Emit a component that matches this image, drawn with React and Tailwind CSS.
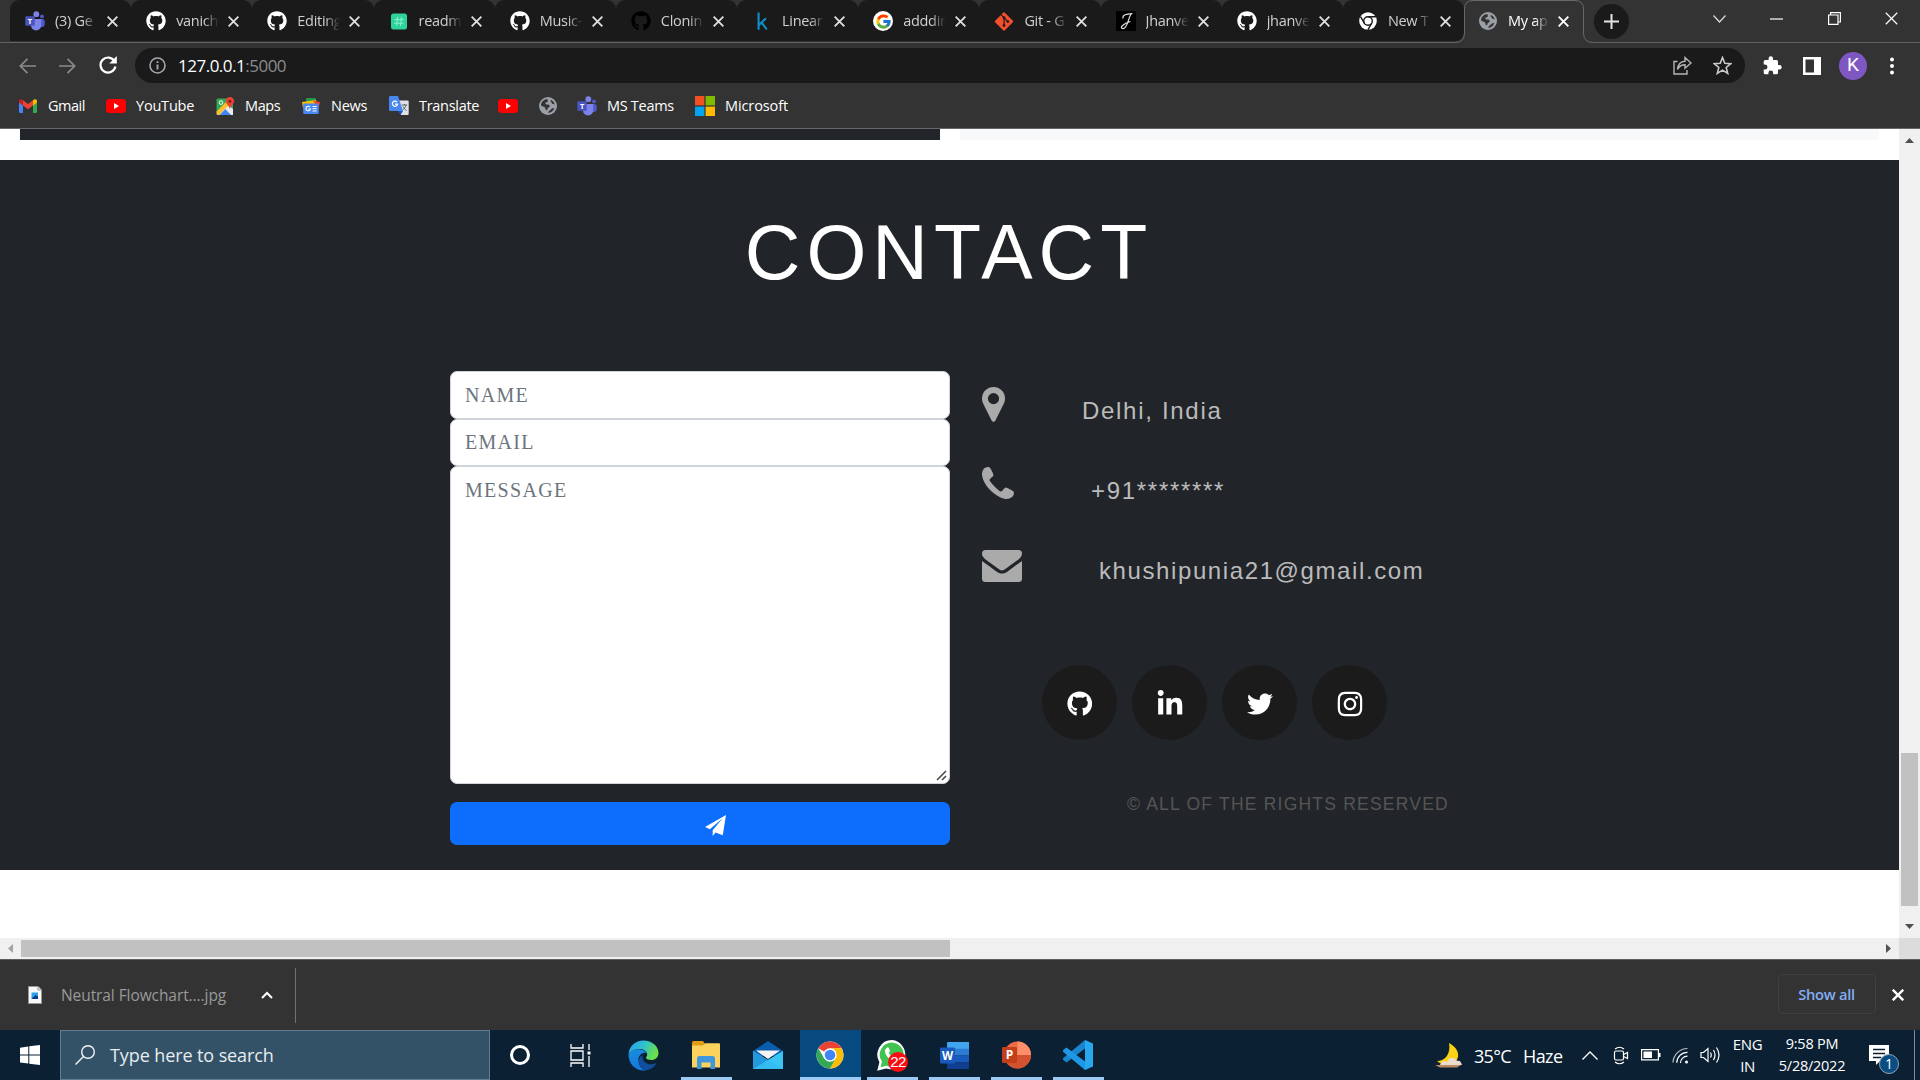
import React from "react";
import { FaGithub, FaLinkedinIn, FaTwitter, FaGitAlt, FaInstagram } from "react-icons/fa";
import { FcGoogle } from "react-icons/fc";

/* ---------- small drawings ---------- */
const Teams = ({ s = 20 }) => (
  <svg width={s} height={s} viewBox="0 0 20 20">
    <circle cx="17" cy="5.4" r="1.9" fill="#5059c9" />
    <rect x="13" y="8" width="6.7" height="8" rx="2.4" fill="#5059c9" />
    <circle cx="11.3" cy="3.2" r="2.9" fill="#7b83eb" />
    <path d="M6 8h10.2v6.5a5 5 0 0 1-10.2 0Z" fill="#7b83eb" />
    <rect x="0.3" y="5.3" width="9.4" height="9.4" rx="1" fill="#4b53bc" />
    <text x="5" y="12.7" fontSize="7.5" fontWeight="700" fill="#fff" textAnchor="middle" fontFamily="Open Sans">T</text>
  </svg>
);
const Globe = () => (
  <svg width="18" height="18" viewBox="0 0 18 18">
    <circle cx="9" cy="9" r="9" fill="#9aa0a6" />
    <path d="M2 8.500C2 5 4.800 2.200 8.600 2c-.5 1 .6 1.500.2 2.400-.5 1-2 .6-2.400 1.600-.3 1 .6 1.500 1.500 1.500 1.500 0 2.800.2 2.800 1.700s-2 1.300-2.200 2.500c-.2 1.200-.5 1.500-1 1.500-1.500-.2-.6-2-1.800-2.900C4.800 9.600 3 9.400 2 8.500Z" fill="#333" />
    <path d="M9 15.900c1-.8.300-1.800 1.600-2.400 1.300-.6 1.200-1.600 2.400-2 1-.4 1.800-.2 2.400-.4A7.100 7.100 0 0 1 9 15.900ZM12 2.700c-.5 1-.6 1.600.2 2.200s.6 1.800 1.700 2 1.500.400 1.900.500A7.100 7.100 0 0 0 12 2.700Z" fill="#333" />
  </svg>
);
const Hash = () => (
  <svg width="20" height="20" viewBox="0 0 20 20">
    <rect x="2" y="2.500" width="16" height="16" rx="2.500" fill="#2ed39a" />
    <path d="M8.600 5.800 7.600 15M12.500 5.800l-1 9.200M5.500 8.600h9.200M5.200 12.200h9.200" stroke="#8ff0cc" strokeWidth="1" />
  </svg>
);
const Kaggle = () => (
  <svg width="20" height="20" viewBox="0 0 20 20" fill="none" stroke="#0e8fc7" strokeWidth="2.100">
    <path d="M6.600 1.500v17.200M14 7.200l-6.800 6.600M9.500 11.300l5.300 7.200" />
  </svg>
);
const GoogleTab = () => (
  <span className="flex size-5 items-center justify-center rounded-full bg-white"><FcGoogle size={17} /></span>
);
const JLogo = () => (
  <svg width="20" height="20" viewBox="0 0 20 20">
    <rect width="20" height="20" rx="1" fill="#000" />
    <path d="M7 7.500C6 4 11 2.800 15.500 2.600 12 6 12 17.500 7 17.600 2.800 17.400 7 12.500 14.500 10.500" fill="none" stroke="#ddd" strokeWidth="1.200" />
  </svg>
);
const ChromeMono = () => (
  <svg width="18" height="18" viewBox="0 0 18 18">
    <circle cx="9" cy="9" r="8.800" fill="#fff" />
    <g fill="none" stroke="#1a1a1a" strokeWidth="1.400">
      <circle cx="9" cy="9" r="4.300" />
      <path d="M9 4.700h8M12.700 11.200l-3.800 6.700M5.300 11.200 1.500 4.600" />
    </g>
  </svg>
);
const Gmail = () => (
  <svg width="18" height="14" viewBox="0 0 18 14">
    <path d="M0 2v10.800q0 1.200 1.200 1.200H4V5.500Z" fill="#4285f4" />
    <path d="M18 2v10.800q0 1.200-1.200 1.200H14V5.500Z" fill="#34a853" />
    <path d="M14 1.300v5.200l4-3V2.100c0-2-2.300-2.700-4-.8Z" fill="#fbbc04" />
    <path d="M4 1.300 9 5l5-3.700v5.200L9 10.200 4 6.500Z" fill="#ea4335" />
    <path d="M4 1.300v5.200l-4-3V2.100C0 .1 2.300-.6 4 1.300Z" fill="#c5221f" />
  </svg>
);
const YouTube = () => (
  <svg width="20" height="14" viewBox="0 0 20 14">
    <rect width="20" height="14" rx="3.500" fill="#f00" />
    <path d="m8 4 5 3-5 3Z" fill="#fff" />
  </svg>
);
const Maps = () => (
  <svg width="19" height="19" viewBox="0 0 19 19">
    <rect x="0.500" y="1.500" width="16.500" height="16.500" rx="1.500" fill="#34a853" />
    <path d="M1 17.500 11 7l6 5v6H1Z" fill="#e8eaed" />
    <path d="m3.500 18 5.800-6 5.700 6Z" fill="#4285f4" />
    <path d="M.6 14.500 12.500 2.500l3 3L3 18H2Q.6 18 .6 16.500Z" fill="#fbc02d" />
    <path d="M13.900 0a4.200 4.200 0 0 0-4.200 4.200c0 3 3.600 4.300 4.200 8 .6-3.700 4.200-5 4.200-8A4.200 4.200 0 0 0 13.900 0Z" fill="#ea4335" />
    <circle cx="13.900" cy="4.200" r="1.500" fill="#7d1d17" />
    <circle cx="5" cy="5.600" r="1.800" fill="none" stroke="#fff" />
  </svg>
);
const News = () => (
  <svg width="18" height="16" viewBox="0 0 18 16">
    <rect x="4" y="0" width="10" height="8" rx="1" fill="#1e9d4b" transform="rotate(4 8 4)" />
    <path d="m0 4 14-2 2 8H1Z" fill="#fbbc04" />
    <path d="M11 2.500 18 4l-1.500 7Z" fill="#ea4335" />
    <rect x="1.200" y="5.500" width="15.500" height="10.500" rx="1.200" fill="#4a8af4" />
    <path d="M10.500 8.500h4.200M10.500 10.700h4.200M10.500 13h4.200" stroke="#fff" />
    <path d="M8 9a2.300 2.300 0 1 0 .5 2H6.300" fill="none" stroke="#fff" strokeWidth="1.100" />
  </svg>
);
const Translate = () => (
  <svg width="20" height="20" viewBox="0 0 20 20">
    <path d="M8 4.500h10.500q1.200 0 1.200 1.200v12q0 1.200-1.200 1.200H12Z" fill="#dfe1e5" />
    <path d="M1.300 0H9l5 15H1.300Q0 15 0 13.700V1.300Q0 0 1.300 0Z" fill="#4a86f0" />
    <path d="m9 15h5l-2.500 4Z" fill="#1b56c4" />
    <path d="M8 6a2.600 2.600 0 1 0 .6 2.200H6" fill="none" stroke="#fff" strokeWidth="1.200" />
    <path d="M12.700 9h5.500M15.500 8v1M17 9c-.5 2.500-2 4-3.200 4.800M14 10.500c.6 1.500 2 3 3.500 4" fill="none" stroke="#59616b" />
  </svg>
);
const Microsoft = () => (
  <svg width="20" height="20" viewBox="0 0 20 20">
    <path d="M0 0h9.400v9.400H0Z" fill="#f25022" /><path d="M10.600 0H20v9.400h-9.400Z" fill="#7fba00" />
    <path d="M0 10.600h9.400V20H0Z" fill="#00a4ef" /><path d="M10.600 10.600H20V20h-9.400Z" fill="#ffb900" />
  </svg>
);
const X = ({ s = 10, w = 1.8, c = "#dedede" }) => (
  <svg width={s} height={s} viewBox="0 0 10 10"><path d="m.6.6 8.800 8.800M9.400.6.6 9.400" stroke={c} strokeWidth={w} /></svg>
);
const Chrome = () => (
  <svg width="28" height="28" viewBox="0 0 28 28">
    <circle cx="14" cy="14" r="13.500" fill="#fff" />
    <path d="M14 14 2.300 7.300A13.500 13.500 0 0 1 25.700 7.300H14Z" fill="#ea4335" />
    <path d="M25.700 7.300A13.500 13.500 0 0 1 14 27.500l5.900-10.200L14 7.300Z" fill="#fbbc04" />
    <path d="M14 27.500A13.500 13.500 0 0 1 2.300 7.300l5.900 10 11.700 0Z" fill="#34a853" />
    <circle cx="14" cy="14" r="6.700" fill="#fff" /><circle cx="14" cy="14" r="5.300" fill="#4285f4" />
  </svg>
);
const Edge = () => (
  <svg width="31" height="31" viewBox="0 0 31 31">
    <defs>
      <linearGradient id="edgeTop" x1="0" y1="0" x2="1" y2=".4"><stop stopColor="#2b9de8" /><stop offset=".5" stopColor="#2cc0d3" /><stop offset="1" stopColor="#6be04b" /></linearGradient>
      <linearGradient id="edgeLeft" x1="0" y1="0" x2=".3" y2="1"><stop stopColor="#1b8de0" /><stop offset="1" stopColor="#1179da" /></linearGradient>
    </defs>
    <path d="M.5 14.500C1 6 7.500.5 15.500.5 24 .5 30.500 6.300 30.500 13c0 4.500-3.500 7-7 7-3.800 0-5.500-1.400-5.500-2.300 0-.8 1.200-1 1.200-3.200 0-3-3-5.500-7-5.500-5.500 0-10 2-11.700 5.500Z" fill="url(#edgeTop)" />
    <path d="M.5 14.500C2 11 6.500 9 11.500 9.200c4 .2 6.500 2 7.300 3.800-3-1-8.300.8-8.300 7C10.500 25.500 14 30 18 30.300 8.500 32 .5 24.500.5 14.500Z" fill="url(#edgeLeft)" />
    <path d="M14.500 14.800c-3 2.200-4.300 5.500-3.200 9.200C12.500 28 16 30.800 19 30.200c4-.8 7-3.200 8.800-6 .4-.7-.2-1.200-1-.8-6.500 3-13.500-1.400-12.300-8.600Z" fill="#114f9d" />
  </svg>
);
const Explorer = () => (
  <svg width="28" height="28" viewBox="0 0 28 28">
    <path d="M0 1.500Q0 0 1.500 0H11l2.500 3.500V8H0Z" fill="#e09c12" />
    <path d="M0 4.500h11l2.300-2.300H27q1 0 1 1V26.500H0Z" fill="#fbd25c" />
    <path d="M5 28V17.500Q5 15 7.500 15h13q2.500 0 2.500 2.500V28h-4.500v-6.500h-9V28Z" fill="#3f97dc" />
  </svg>
);
const Mail = () => (
  <svg width="30" height="28" viewBox="0 0 30 28">
    <path d="M0 10 15 0l15 10v5H0Z" fill="#0a5cae" />
    <path d="M0 10v18h30V10L15 19Z" fill="#35bdf0" /><path d="M0 10v18h30L0 10Z" fill="#2399dc" /><path d="M0 28 30 10v18Z" fill="#3bc7f5" opacity=".75" />
    <path d="M3 9.500h24L15 18Z" fill="#f4f4f4" />
  </svg>
);
const Word = () => (
  <svg width="29" height="27" viewBox="0 0 29 27">
    <path d="M8 0h21v7H7V1q0-1 1-1Z" fill="#41a5ee" /><path d="M7 6.700h22v6.800H7Z" fill="#2b7cd3" /><path d="M7 13.500h22v6.800H7Z" fill="#185abd" /><path d="M7 20.200h22V26q0 1-1 1H8q-1 0-1-1Z" fill="#103f91" />
    <rect y="5.500" width="15" height="16" rx="1.300" fill="#185abd" />
    <text x="7.500" y="17.500" fontSize="11.500" fontWeight="700" fill="#fff" textAnchor="middle" fontFamily="Open Sans">W</text>
  </svg>
);
const Ppt = () => (
  <svg width="29" height="28" viewBox="0 0 29 28">
    <circle cx="15.500" cy="14" r="13.500" fill="#ed6c47" /><path d="M15.500.5A13.500 13.500 0 0 1 29 14H15.500Z" fill="#ff8f6b" /><path d="M2 14h27a13.500 13.500 0 0 1-27 0Z" fill="#d35230" />
    <rect y="6" width="15" height="16" rx="1.300" fill="#c43e1c" />
    <text x="7.500" y="18.300" fontSize="12" fontWeight="700" fill="#fff" textAnchor="middle" fontFamily="Open Sans">P</text>
  </svg>
);
const Code = () => (
  <svg width="30" height="30" viewBox="0 0 30 30">
    <path d="m22 0 8 3.500v23L22 30Z" fill="#27a7ee" />
    <path d="M22 0v8.500L3.500 22.500 0 19.800v-1.500Z" fill="#1a85cf" />
    <path d="M22 30v-8.500L3.500 7.500 0 10.200v1.500Z" fill="#1e97e4" />
  </svg>
);
const WhatsApp = () => (
  <div className="relative h-[30px] w-[30px]">
    <svg width="30" height="31" viewBox="0 0 30 31">
      <path d="M15 0a14.700 14.700 0 0 0-12.600 22.200L.2 30.800l8.800-2.200A14.700 14.700 0 1 0 15 0Z" fill="#fff" />
      <path d="M15 2.500A12.200 12.200 0 0 0 4.900 21.600l-1.300 5.600 5.800-1.400A12.200 12.200 0 1 0 15 2.500Z" fill="#40c351" />
      <path d="M9.500 8c1-1.200 2-.8 2.400.2l1 2.500c.2.900-1.200 1.700-1 2.300 1.400 2.600 3 3.800 5.400 4.800l2-1.800 3.300 1.700c.5 3-3.600 4.500-6 3.500C12 19.500 7 14 8 10Z" fill="#fff" />
    </svg>
    <span className="absolute left-[11px] top-[12px] flex h-5 w-5 items-center justify-center rounded-full bg-[#fb0d12] font-['Liberation_Sans'] text-[15px] tracking-[-0.5px] text-white">22</span>
  </div>
);

const tabs = [
  ["(3) Ge", <Teams key="i" />],
  ["vanich", <FaGithub key="i" size={20} color="#fff" />],
  ["Editing", <FaGithub key="i" size={20} color="#fff" />],
  ["readm", <Hash key="i" />],
  ["Music-", <FaGithub key="i" size={20} color="#fff" />],
  ["Clonin", <FaGithub key="i" size={20} color="#000" />],
  ["Linear", <Kaggle key="i" />],
  ["adddir", <GoogleTab key="i" />],
  ["Git - G", <FaGitAlt key="i" size={21} color="#f4502c" />],
  ["Jhanve", <JLogo key="i" />],
  ["jhanve", <FaGithub key="i" size={20} color="#fff" />],
  ["New T", <ChromeMono key="i" />],
];

function TabBody({ label, icon, active }) {
  return (
    <div className={active ? "flex h-[42px] items-center pl-[14px] text-white" : "flex h-[42px] items-center pl-[15px] text-[#cfcfcf]"}>
      <span className="flex w-5 justify-center">{icon}</span>
      <span className={`${active ? "w-[41px]" : "w-[43px]"} ml-[10px] overflow-hidden whitespace-nowrap text-[14.5px] tracking-[-0.3px] [mask-image:linear-gradient(90deg,#000_65%,transparent)]`}>{label}</span>
      <span className="ml-[9px]"><X s={11} w={1.7} c={active ? "#fff" : "#dedede"} /></span>
    </div>
  );
}

function TabStrip() {
  return (
    <div className="flex h-[43px] border-b border-[#626262] bg-[#333]">
      <div className="ml-[10px] flex h-[41px] w-[1454px] bg-[#333]">
        {tabs.map(([label, icon], i) => (
          <div key={i} className="relative min-w-0 flex-1 rounded-t-[9px] bg-[#1a1a1a] last:rounded-br-[9px]">
            <TabBody label={label} icon={icon} />
            {i < 11 && <span className="absolute -right-px top-[10px] h-[25px] w-px bg-[#5c5c5c]" />}
          </div>
        ))}
      </div>
      <div className="relative w-[120px]">
        <svg className="absolute -left-[8px] top-0" width="138" height="43" viewBox="0 0 138 43">
          <path d="M0 42.500Q8.500 42 8.500 33V9Q8.500.5 17 .5H119Q127.500.5 127.500 9V33Q127.500 42.500 137 42.500V43H0Z" fill="#333" />
          <path d="M0 42.500Q8.500 42 8.500 33V9Q8.500.5 17 .5H119Q127.500.5 127.500 9V33Q127.500 42.500 137 42.500H138" fill="none" stroke="#686868" />
        </svg>
        <div className="relative"><TabBody label="My ap" icon={<Globe />} active /></div>
      </div>
      <span className="ml-[10px] mt-1 flex size-[35px] items-center justify-center rounded-full bg-[#1a1a1a]">
        <svg width="15" height="15" viewBox="0 0 15 15"><path d="M7.500 0v15M0 7.500h15" stroke="#e4e4e4" strokeWidth="2" /></svg>
      </span>
      <div className="ml-auto mr-[22px] flex h-[37px] items-center gap-[44.500px]">
        <svg width="13" height="8" viewBox="0 0 13 8"><path d="m.5.500 6 6.500 6-6.500" fill="none" stroke="#ddd" strokeWidth="1.200" /></svg>
        <svg width="13" height="2"><path d="M0 1h13" stroke="#fff" strokeWidth="1.200" /></svg>
        <svg width="13" height="13" viewBox="0 0 13 13" fill="none" stroke="#fff" strokeWidth="1.200"><path d="M.6 3h9.400v9.400H.6ZM2.600 3V.600h9.800V10H10" /></svg>
        <X s={13} w={0.9} c="#fff" />
      </div>
    </div>
  );
}

function Toolbar() {
  return (
    <div className="flex h-[45px] items-center bg-[#333]">
      <svg className="ml-[19px]" width="17" height="16" viewBox="0 0 17 16" fill="none" stroke="#8a8a8a" strokeWidth="1.700"><path d="M17 8H1.500M8.500.8 1.300 8l7.200 7.200" /></svg>
      <svg className="ml-[23px]" width="17" height="16" viewBox="0 0 17 16" fill="none" stroke="#8a8a8a" strokeWidth="1.700"><path d="M0 8h15.500M8.500.8 15.700 8l-7.200 7.200" /></svg>
      <svg className="ml-[23px] -mt-px" width="18" height="18" viewBox="0 0 18 18" fill="none" stroke="#fff" strokeWidth="2.200"><path d="M15.500 5.200A7.500 7.500 0 1 0 16.400 10.500" /><path d="M17.800 0v7.500h-7.500Z" fill="#fff" stroke="none" /></svg>
      <div className="ml-[18px] flex h-[35px] w-[1610px] items-center rounded-full bg-[#1a1a1a]">
        <svg className="ml-[14px]" width="17" height="17" viewBox="0 0 17 17" fill="none" stroke="#a2a7ae" strokeWidth="1.600"><circle cx="8.500" cy="8.500" r="7.500" /><path d="M8.500 7.500v5M8.500 4.200v1.900" strokeWidth="1.900" /></svg>
        <span className="ml-3 whitespace-nowrap text-[17px] tracking-[-0.500px] text-white">127.0.0.1<span className="text-[#8c8c8c]">:5000</span></span>
        <svg className="ml-auto" width="19" height="19" viewBox="0 0 19 19" fill="none" stroke="#b5b5b5" strokeWidth="1.400"><path d="M4.500 5.500H1v12.500h13V14" /><path d="M4.500 13.500C5 8 8 5.500 12 5.300V1.500l6 5.500-6 5.300V8.800C8.800 8.800 6.300 10 4.500 13.500Z" /></svg>
        <svg className="ml-[21px] mr-[13px]" width="19" height="19" viewBox="0 0 19 19" fill="none" stroke="#c9c9c9" strokeWidth="1.600"><path d="m9.500 1.500 2.300 5.700 6 .4-4.600 3.900 1.500 5.900-5.200-3.300-5.200 3.300 1.500-5.900L1.200 7.600l6-.4Z" /></svg>
      </div>
      <svg className="ml-[18px]" width="19" height="19" viewBox="0 0 19 19" fill="#fff"><path d="M16.500 9H15V5.500Q15 4 13.500 4H10V2.500a2.200 2.200 0 0 0-4.400 0V4H2.200Q.700 4 .700 5.500v3h1.200a2.500 2.500 0 0 1 0 5H.700v3.300q0 1.500 1.500 1.500h3.200V17a2.400 2.400 0 0 1 4.800 0v1.300h3.300q1.500 0 1.500-1.500v-3.400h1.500a2.200 2.200 0 0 0 0-4.400Z" /></svg>
      <svg className="ml-[21px]" width="18" height="18" viewBox="0 0 18 18"><path fillRule="evenodd" d="M0 0h18v18H0ZM2.500 2.500v13H11v-13Z" fill="#fff" /></svg>
      <span className="ml-[18px] flex size-7 items-center justify-center rounded-full bg-[#7e57c2] font-['Roboto'] text-[19px] text-white">K</span>
      <svg className="ml-[23px]" width="4" height="18" viewBox="0 0 4 18" fill="#fff"><circle cx="2" cy="2.500" r="2" /><circle cx="2" cy="9" r="2" /><circle cx="2" cy="15.500" r="2" /></svg>
    </div>
  );
}

function Bookmark({ icon, label, className }) {
  return (
    <div className={`flex items-center ${className}`}>
      <span className="flex w-5 justify-center">{icon}</span>
      <span className="ml-[10px] whitespace-nowrap text-[14.5px]">{label}</span>
    </div>
  );
}

function Bookmarks() {
  return (
    <div className="flex h-[41px] items-center border-b border-[#666] bg-[#333] pb-1 pl-[18px] text-white">
      <Bookmark className="w-[88px] tracking-[-0.5px]" icon={<Gmail />} label="Gmail" />
      <Bookmark className="w-[109px] tracking-[-0.2px]" icon={<YouTube />} label="YouTube" />
      <Bookmark className="w-[86px] tracking-[-0.4px]" icon={<Maps />} label="Maps" />
      <Bookmark className="w-[88px] tracking-[-0.25px]" icon={<News />} label="News" />
      <Bookmark className="w-[109px] tracking-[-0.3px]" icon={<Translate />} label="Translate" />
      <span className="w-[41px]"><YouTube /></span>
      <span className="w-[38px]"><Globe /></span>
      <Bookmark className="w-[118px] tracking-[-0.3px]" icon={<Teams />} label="MS Teams" />
      <Bookmark className="tracking-[-0.1px]" icon={<Microsoft />} label="Microsoft" />
    </div>
  );
}

const fieldCls = "block w-full rounded-[7px] border border-[#ced4da] bg-white pl-[14px] font-['Liberation_Serif'] text-[20px] tracking-[1.3px] placeholder:text-[#6c757d]";

function Contact() {
  return (
    <section className="h-[710px] bg-[#212529] font-['Liberation_Sans']">
      <h1 className="pt-[49px] pr-px text-center text-[77px] leading-[86px] tracking-[6px] text-white">CONTACT</h1>
      <div className="flex pl-[450px] pt-[76px]">
        <form className="w-[500px]">
          <input className={`${fieldCls} h-[48px]`} placeholder="NAME" />
          <input className={`${fieldCls} h-[47px]`} placeholder="EMAIL" />
          <div className="relative">
            <textarea className={`${fieldCls} h-[318px] resize-none pt-[8px]`} placeholder="MESSAGE" />
            <svg className="absolute bottom-[3px] right-[3px]" width="11" height="11" viewBox="0 0 11 11"><path d="M1 10 10 1M6 10l4-4" stroke="#444" strokeWidth="1.500" /></svg>
          </div>
          <button type="button" className="mt-[18px] flex h-[43px] w-full items-center justify-center rounded-[7px] bg-[#0d6efd] pl-[31px] pt-1">
            <svg width="21" height="21" viewBox="0 0 20 20" fill="#fff"><path d="M20 0 0 11.500l4.600 2L16.800 3 7.300 14.600V20l2.800-3.400 6.800 2.800Z" /></svg>
          </button>
        </form>
        <div className="pl-[32px] text-[24px] text-[#bbb]">
          <div className="flex h-[79px]">
            <svg className="mt-4" width="23" height="35" viewBox="0 0 23 35" fill="#aaa"><path fillRule="evenodd" d="M11.500 0A11.500 11.500 0 0 0 0 11.500c0 2.300.5 3.800 1.500 5.800l8.200 16.500q1.800 2.200 3.600 0l8.200-16.500c1-2 1.500-3.500 1.500-5.800A11.500 11.500 0 0 0 11.500 0Zm0 6a5.600 5.600 0 1 1 0 11.200 5.600 5.600 0 0 1 0-11.200Z" /></svg>
            <span className="ml-[77px] mt-[26px] whitespace-nowrap leading-7 tracking-[1.700px]">Delhi, India</span>
          </div>
          <div className="flex h-[80px]">
            <svg className="mt-[17px]" width="32" height="32" viewBox="0 0 32 32" fill="#aaa"><path d="M32 25.200c0 1-.4 2.700-.8 3.600-.6 1.300-3.500 3.200-6.600 3.200-3.300 0-10-2.700-16-8.600S0 10.600 0 7.400C0 4.300 1.800 1.400 3.200.8 4 .4 5.800 0 6.800 0c1.500 0 4.700 7.200 4.700 8 0 1.800-4 3.500-4 5C7.500 14.700 17.300 24.600 19 24.600c1.500 0 3.200-4 5-4 .8 0 8 3.700 8 4.600Z" /></svg>
            <span className="ml-[77px] mt-[27px] whitespace-nowrap leading-7 tracking-[1.700px]">+91********</span>
          </div>
          <div className="flex h-[135px]">
            <svg className="mt-[20px]" width="40" height="32" viewBox="0 0 40 32" fill="#aaa"><path d="M3.500 0h33Q40 0 40 3.500C40 6 38.400 8 36.500 9.400L24 18.500c-3 2.500-5 2.500-8 0L3.500 9.400C1.400 7.800 0 5.600 0 3.800Q0 0 3.500 0ZM0 11c6 4.200 10 7.200 14 10.200 4 3.200 8 3.200 12 0 4-3 8-6 14-10.200v17.500Q40 32 36.500 32h-33Q0 32 0 28.500Z" /></svg>
            <span className="ml-[77px] mt-[27px] whitespace-nowrap leading-7 tracking-[1.600px]">khushipunia21@gmail.com</span>
          </div>
          <div className="ml-[60px] flex gap-[15px] text-white">
            {[[FaGithub, 25.5], [FaLinkedinIn, 28], [FaTwitter, 26], [FaInstagram, 28]].map(([Icon, size], i) => (
              <a key={i} className="flex size-[75px] items-center justify-center rounded-full bg-[#1b1b1b] pt-[3px]"><Icon size={size} /></a>
            ))}
          </div>
          <p className="ml-[145px] mt-[53px] whitespace-nowrap text-[17.5px] leading-[22px] tracking-[1.220px] text-[#555]">© ALL OF THE RIGHTS RESERVED</p>
        </div>
      </div>
    </section>
  );
}

const Arrow = ({ d, c = "#505050" }) => <svg width="9" height="9" viewBox="0 0 9 9"><path d={d} fill={c} /></svg>;

function Page() {
  return (
    <div className="flex h-[830px] flex-col bg-white">
      <div className="flex h-[809px]">
        <div className="w-[1899px]">
          <div className="flex h-[31px] gap-5 pl-5">
            <div className="h-[11px] w-[920px] bg-[#212529]" />
            <div className="h-[11px] w-[919px] bg-[#f8f9fa]" />
          </div>
          <Contact />
        </div>
        <div className="flex w-[21px] flex-col items-center bg-[#f0f0f0] pb-[7px] pt-[7px]">
          <Arrow d="M0 7 4.500 2 9 7Z" />
          <div className="mt-[608px] h-[153px] w-[17px] bg-[#c1c1c1]" />
          <span className="mt-auto"><Arrow d="M0 2 4.500 7 9 2Z" /></span>
        </div>
      </div>
      <div className="flex h-[21px] bg-[#f0f0f0]">
        <div className="flex w-[1899px] items-center">
          <span className="ml-[6px] w-[15px]"><Arrow d="M7 0 2 4.500 7 9Z" c="#a3a3a3" /></span>
          <div className="h-[17px] w-[929px] bg-[#c1c1c1]" />
          <span className="ml-auto mr-[6px]"><Arrow d="M2 0 7 4.500 2 9Z" /></span>
        </div>
        <div className="w-[21px] bg-[#dcdcdc]" />
      </div>
    </div>
  );
}

function Downloads() {
  return (
    <div className="flex h-[71px] items-center border-t border-[#5e5e5e] bg-[#333]">
      <svg className="ml-7" width="14" height="18" viewBox="0 0 14 18"><path d="M.5.5h9.500l3.500 3.500v13.500H.5Z" fill="#f8f8f8" stroke="#999" /><path d="M10 .5V4h3.500" fill="#ddd" stroke="#999" /><path d="M3.500 6.500h6.500v6.500H3.500Z" fill="#2ba2e8" /><path d="m3.500 13 4-4 2.500 1.500V13Z" fill="#0c3b7d" /></svg>
      <span className="ml-[19px] mt-[2px] w-[200px] whitespace-nowrap text-[15.500px] tracking-[-0.080px] text-[#999]">Neutral Flowchart....jpg</span>
      <svg width="12" height="8" viewBox="0 0 12 8"><path d="m1 7 5-5 5 5" fill="none" stroke="#fff" strokeWidth="2" /></svg>
      <span className="ml-[22px] h-[55px] w-px bg-[#717171]" />
      <span className="-mt-[2px] ml-auto flex h-10 w-[98px] items-center justify-center rounded-[5px] border border-[#404040] pr-px text-[14.700px] font-semibold tracking-[-0.300px] text-[#83adf6]">Show all</span>
      <span className="ml-4 mr-4 -mt-px"><X s={12} w={2} c="#fff" /></span>
    </div>
  );
}

function TaskItem({ children, className = "", open = true, wide }) {
  return (
    <div className={`flex h-[50px] flex-col items-center justify-between ${className}`}>
      <div className="flex h-[47px] items-center justify-center pr-px pt-[3px]">{children}</div>
      {open && <span className={wide ? "h-[3px] w-full bg-[#9ccaf5]" : "h-[3px] w-[51px] bg-[#9ccaf5]"} />}
    </div>
  );
}

function Taskbar() {
  return (
    <div className="flex h-[50px] bg-[#0b2032] text-white">
      <div className="flex w-[60px] items-center justify-center">
        <svg width="20" height="20" viewBox="0 0 20 20" fill="#fff"><path d="M0 2.700 8.300 1.500v8H0ZM9.300 1.300 20 0v9.500H9.300ZM0 10.500h8.300v8L0 17.400ZM9.300 10.500H20V20L9.300 18.700Z" /></svg>
      </div>
      <div className="flex w-[430px] items-center border border-[#607e91] bg-[#345267]">
        <svg className="ml-[14px]" width="20" height="20" viewBox="0 0 20 20" fill="none" stroke="#f1f5f7" strokeWidth="1.400"><circle cx="13" cy="7" r="6.300" /><path d="M8.500 11.500.5 19.500" /></svg>
        <span className="ml-[15px] whitespace-nowrap text-[18px] tracking-[-0.100px] text-[#e6ecef]">Type here to search</span>
      </div>
      <div className="flex w-[60px] items-center justify-center"><span className="size-5 rounded-full border-[3px] border-white" /></div>
      <div className="flex w-[61px] items-center justify-center">
        <svg width="21" height="23" viewBox="0 0 21 23" fill="none" stroke="#fff" strokeWidth="1.300"><path d="M1 0v4h12V0M1 23v-4h12v4M1 7h12v9H1ZM19 0v6M19 12v11" /><path d="M17.500 7.500h3v3h-3Z" fill="#fff" stroke="none" /></svg>
      </div>
      <TaskItem className="w-[66px]" open={false}><Edge /></TaskItem>
      <TaskItem className="w-[59px]"><Explorer /></TaskItem>
      <TaskItem className="w-[64px]" open={false}><Mail /></TaskItem>
      <TaskItem className="w-[61px] bg-[#064a80]" wide><Chrome /></TaskItem>
      <TaskItem className="w-[63px]"><WhatsApp /></TaskItem>
      <TaskItem className="w-[61px]"><Word /></TaskItem>
      <TaskItem className="w-[63px]"><Ppt /></TaskItem>
      <TaskItem className="w-[61px]"><Code /></TaskItem>
      <div className="ml-auto flex items-center">
        <svg className="w-[28px]" width="28" height="25" viewBox="0 0 28 25"><path d="M14 0c8 4 12 12 7 18-5 5-15 4-19 0 8 0 14-7 12-18Z" fill="#fbd213" /><path d="M5 22c1-4 5-5 7-3 1-5 8-6 10-1 3-1 4 1 5 4Z" fill="#eadccb" /><path d="M0 22h26l-4 2.500H5Z" fill="#b88b64" /></svg>
        <span className="ml-[11px] mt-[2px] w-[49px] whitespace-nowrap text-[18px] tracking-[-0.700px]">35°C</span>
        <span className="mt-[2px] w-[59px] text-[18px] tracking-[-0.600px]">Haze</span>
        <svg width="16" height="9" viewBox="0 0 16 9"><path d="m.5 8.500 7.500-7.500 7.500 7.500" fill="none" stroke="#fff" strokeWidth="1.300" /></svg>
        <svg className="ml-[15px]" width="16" height="19" viewBox="0 0 16 19" fill="none" stroke="#fff" strokeWidth="1.200"><rect x="1.500" y="5" width="9" height="9" rx="1.500" /><path d="m10.500 8.500 4-2v6l-4-2M2 3Q6.500-.5 11 3M2 16q4.500 3.500 9 0" /></svg>
        <svg className="ml-3" width="20" height="12" viewBox="0 0 20 12"><path d="M.6.600h16.800v10.300H.6Z" fill="none" stroke="#fff" strokeWidth="1.200" /><path d="M2.500 2.500h8.500V9H2.500ZM18 4h1.500v4H18Z" fill="#fff" /></svg>
        <svg className="ml-[11px]" width="18" height="17" viewBox="0 0 18 17" fill="none" stroke="#fff" strokeWidth="1.200"><path d="M1 15.500A14.500 14.500 0 0 1 15.500 1.500" opacity=".7" /><path d="M4.800 15.800A10.500 10.500 0 0 1 15.500 5.300M8.500 16A6.800 6.800 0 0 1 15.500 9.200" /><circle cx="14.500" cy="15" r="1.500" fill="#fff" stroke="none" /></svg>
        <svg className="ml-[10px]" width="21" height="18" viewBox="0 0 21 18" fill="none" stroke="#fff" strokeWidth="1.200"><path d="M1 6.500h2.500L8 2.500v13L3.500 11.500H1ZM10.500 6.500q1.500 2.500 0 5M13.500 4q3 5 0 10M16.500 1.500q5 7.500 0 15" /></svg>
        <div className="ml-[8px] flex w-[37px] flex-col items-center text-[15px] leading-[22px] tracking-[-0.400px]"><span>ENG</span><span>IN</span></div>
        <div className="mb-px ml-[6px] flex w-[80px] flex-col items-center whitespace-nowrap text-[14.500px] leading-[22px] tracking-[-0.250px]"><span>9:58 PM</span><span>5/28/2022</span></div>
        <div className="relative ml-[17px] h-[21px] w-[45px]">
          <svg width="20" height="21" viewBox="0 0 20 21"><path d="M0 0h20v16H11l-4 4v-4H0Z" fill="#fff" /><path d="M4 4.500h12M4 8.500h12M4 12.500h8" stroke="#0b2032" strokeWidth="1.300" /></svg>
          <span className="absolute left-[10px] top-[9px] flex size-5 items-center justify-center rounded-full border border-[#8ea5b5] bg-[#0a4d82] text-[14px]">1</span>
        </div>
        <span className="mr-[5px] h-[50px] w-px bg-[#7b8a96]" />
      </div>
    </div>
  );
}

export default function App() {
  return (
    <div className="h-[1080px] w-[1920px] overflow-hidden font-['Open_Sans',sans-serif]">
      <TabStrip />
      <Toolbar />
      <Bookmarks />
      <Page />
      <Downloads />
      <Taskbar />
    </div>
  );
}
